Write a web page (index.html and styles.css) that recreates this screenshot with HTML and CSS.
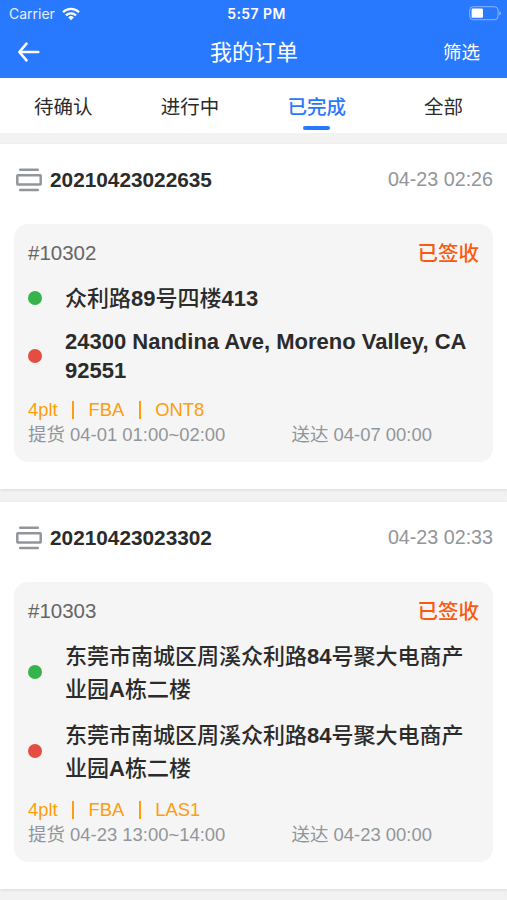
FILE: index.html
```html
<!DOCTYPE html>
<html lang="zh-CN">
<head>
  <meta charset="UTF-8" />
  <meta name="viewport" content="width=device-width, initial-scale=1.0"/>
  <title>我的订单</title>
  <link rel="stylesheet" href="styles.css">
</head>
<body>
  <header class="header">
    <div class="status-bar">
      <div class="carrier">
        <span>Carrier</span>
        <svg class="wifi" width="18" height="14" viewBox="0 0 18 14" fill="none" stroke="#fff" stroke-width="2.3">
          <path d="M1 5.2a11.4 11.4 0 0 1 16 0"/>
          <path d="M4 8.4a7.1 7.1 0 0 1 10 0"/>
          <path d="M9 13.2L6.2 10.4a4 4 0 0 1 5.6 0z" fill="#fff" stroke="none"/>
        </svg>
      </div>
      <span class="clock">5:57 PM</span>
      <svg class="battery" width="33" height="15" viewBox="0 0 33 15">
        <rect x="0.7" y="0.7" width="28.4" height="13" rx="3.6" fill="none" stroke="#fff" stroke-opacity="0.45"/>
        <rect x="2.6" y="2.6" width="11.4" height="9.2" rx="1.2" fill="#fff"/>
        <path d="M30.4 5v4.6a2.5 2.5 0 0 0 0-4.6z" fill="#fff" fill-opacity="0.5"/>
      </svg>
    </div>
    <div class="nav-bar">
      <a href="#" class="back">
        <svg width="24" height="22" viewBox="0 0 24 22" fill="none" stroke="#fff" stroke-width="2.6" stroke-linecap="round" stroke-linejoin="round">
          <path d="M9.5 2.7L2.3 11l7.2 8.3M2.5 11H21.3"/>
        </svg>
      </a>
      <h1>我的订单</h1>
      <a href="#" class="filter">筛选</a>
    </div>
  </header>

  <nav class="tabs">
    <a href="#" class="tab">待确认</a>
    <a href="#" class="tab">进行中</a>
    <a href="#" class="tab active">已完成</a>
    <a href="#" class="tab">全部</a>
  </nav>

  <main class="orders">
    <section class="order">
      <div class="order-head">
        <svg class="order-icon" width="26" height="24" viewBox="0 0 26 24" fill="none" stroke="#929599" stroke-width="2.5">
          <path d="M4.2 1.7h17.6M4.2 22h17.6" stroke-linecap="round"/>
          <rect x="1.3" y="7.2" width="23.4" height="9.4" rx="0.5"/>
        </svg>
        <span class="order-no">20210423022635</span>
        <span class="order-date">04-23 02:26</span>
      </div>
      <div class="shipment">
        <div class="shipment-head">
          <span class="shipment-id">#10302</span>
          <span class="state">已签收</span>
        </div>
        <div class="stop">
          <i class="dot green"></i>
          <p>众利路<b>89</b>号四楼<b>413</b></p>
        </div>
        <div class="stop latin">
          <i class="dot red"></i>
          <p><b>24300 Nandina Ave, Moreno Valley, CA 92551</b></p>
        </div>
        <div class="tags"><span>4plt</span><i class="sep"></i><span>FBA</span><i class="sep"></i><span>ONT8</span></div>
        <div class="times">
          <span>提货 04-01 01:00~02:00</span>
          <span>送达 04-07 00:00</span>
        </div>
      </div>
    </section>

    <section class="order">
      <div class="order-head">
        <svg class="order-icon" width="26" height="24" viewBox="0 0 26 24" fill="none" stroke="#929599" stroke-width="2.5">
          <path d="M4.2 1.7h17.6M4.2 22h17.6" stroke-linecap="round"/>
          <rect x="1.3" y="7.2" width="23.4" height="9.4" rx="0.5"/>
        </svg>
        <span class="order-no">20210423023302</span>
        <span class="order-date">04-23 02:33</span>
      </div>
      <div class="shipment">
        <div class="shipment-head">
          <span class="shipment-id">#10303</span>
          <span class="state">已签收</span>
        </div>
        <div class="stop">
          <i class="dot green"></i>
          <p>东莞市南城区周溪众利路<b>84</b>号聚大电商产<br>业园<b>A</b>栋二楼</p>
        </div>
        <div class="stop">
          <i class="dot red"></i>
          <p>东莞市南城区周溪众利路<b>84</b>号聚大电商产<br>业园<b>A</b>栋二楼</p>
        </div>
        <div class="tags"><span>4plt</span><i class="sep"></i><span>FBA</span><i class="sep"></i><span>LAS1</span></div>
        <div class="times">
          <span>提货 04-23 13:00~14:00</span>
          <span>送达 04-23 00:00</span>
        </div>
      </div>
    </section>
  </main>
</body>
</html>
```

FILE: styles.css
```css
* {
  box-sizing: border-box;
}
body {
  margin: 0;
  height: 900px;
  overflow: hidden;
  background: #f2f2f2;
  font-family: "Liberation Sans", "Noto Sans CJK SC", sans-serif;
  color: #2b2b2b;
}
a {
  color: inherit;
  text-decoration: none;
}
.header {
  height: 78px;
  background: #2979ff;
  color: #fff;
}
.status-bar {
  display: grid;
  grid-template-columns: 1fr auto 1fr;
  align-items: center;
  height: 27px;
  padding: 0 5px 0 9px;
  font-family: Inter, sans-serif;
  font-size: 14px;
}
.carrier {
  display: flex;
  align-items: center;
  gap: 7px;
  color: #e6efff;
}
.clock {
  margin-left: 2px;
  font-weight: 600;
  letter-spacing: 0.4px;
}
.battery {
  justify-self: end;
}
.nav-bar {
  display: grid;
  grid-template-columns: 1fr auto 1fr;
  align-items: center;
  height: 50px;
  padding: 0 27px;
}
.back {
  display: flex;
  margin-left: -10px;
}
.nav-bar h1 {
  margin: 1px 0 0 1px;
  font-size: 22px;
  font-weight: 400;
  line-height: 30px;
}
.filter {
  justify-self: end;
  margin-top: -2px;
  font-size: 18.5px;
}
.tabs {
  display: grid;
  grid-template-columns: repeat(4, 1fr);
  height: 55px;
  background: #fff;
}
.tab {
  position: relative;
  height: 55px;
  font-size: 19.5px;
  line-height: 59px;
  text-align: center;
}
.tab.active {
  color: #2979ff;
  font-weight: 500;
}
.tab.active::after {
  content: "";
  position: absolute;
  left: 50%;
  bottom: 3px;
  width: 27px;
  height: 4px;
  margin-left: -13.5px;
  border-radius: 2px;
  background: #2979ff;
}
.orders {
  display: flex;
  flex-direction: column;
  gap: 13px;
  padding-top: 11px;
}
.order {
  padding: 0 14px 27px;
  background: #fff;
  box-shadow: 0 1px 3px rgba(0,0,0,0.1);
}
.order-head {
  display: flex;
  align-items: center;
  height: 80px;
  padding: 0 0 8px 2px;
}
.order-no {
  margin-left: 8px;
  font-size: 20.8px;
  font-weight: bold;
}
.order-date {
  margin: -1px 0 0 auto;
  font-size: 19.7px;
  color: #929599;
}
.shipment {
  padding: 14px;
  border-radius: 14px;
  background: #f5f5f5;
}
.shipment-head {
  display: flex;
  justify-content: space-between;
  align-items: center;
  height: 30px;
  font-size: 20.5px;
}
.shipment-id {
  color: #666;
}
.state {
  margin-top: -2px;
  color: #fa5a0f;
  font-weight: 500;
}
.stop {
  display: flex;
  align-items: center;
  gap: 23px;
  margin-top: 13px;
  font-size: 22px;
  font-weight: 500;
  line-height: 33px;
}
.stop p {
  margin: 1px 0 -1px;
}
.stop.latin {
  line-height: 28.5px;
}
.dot {
  flex: none;
  width: 14px;
  height: 14px;
  border-radius: 50%;
}
.green {
  background: #36b34a;
}
.red {
  background: #e34d42;
}
.tags {
  display: flex;
  align-items: center;
  height: 25px;
  margin-top: 13px;
  font-size: 18.4px;
  color: #ff9d0a;
}
.sep {
  width: 1.5px;
  height: 18px;
  margin: 0 14.7px;
  background: #ff9d0a;
}
.times {
  display: grid;
  grid-template-columns: 263.5px 1fr;
  height: 26px;
  font-size: 18.45px;
  line-height: 26px;
  color: #929599;
}
```
